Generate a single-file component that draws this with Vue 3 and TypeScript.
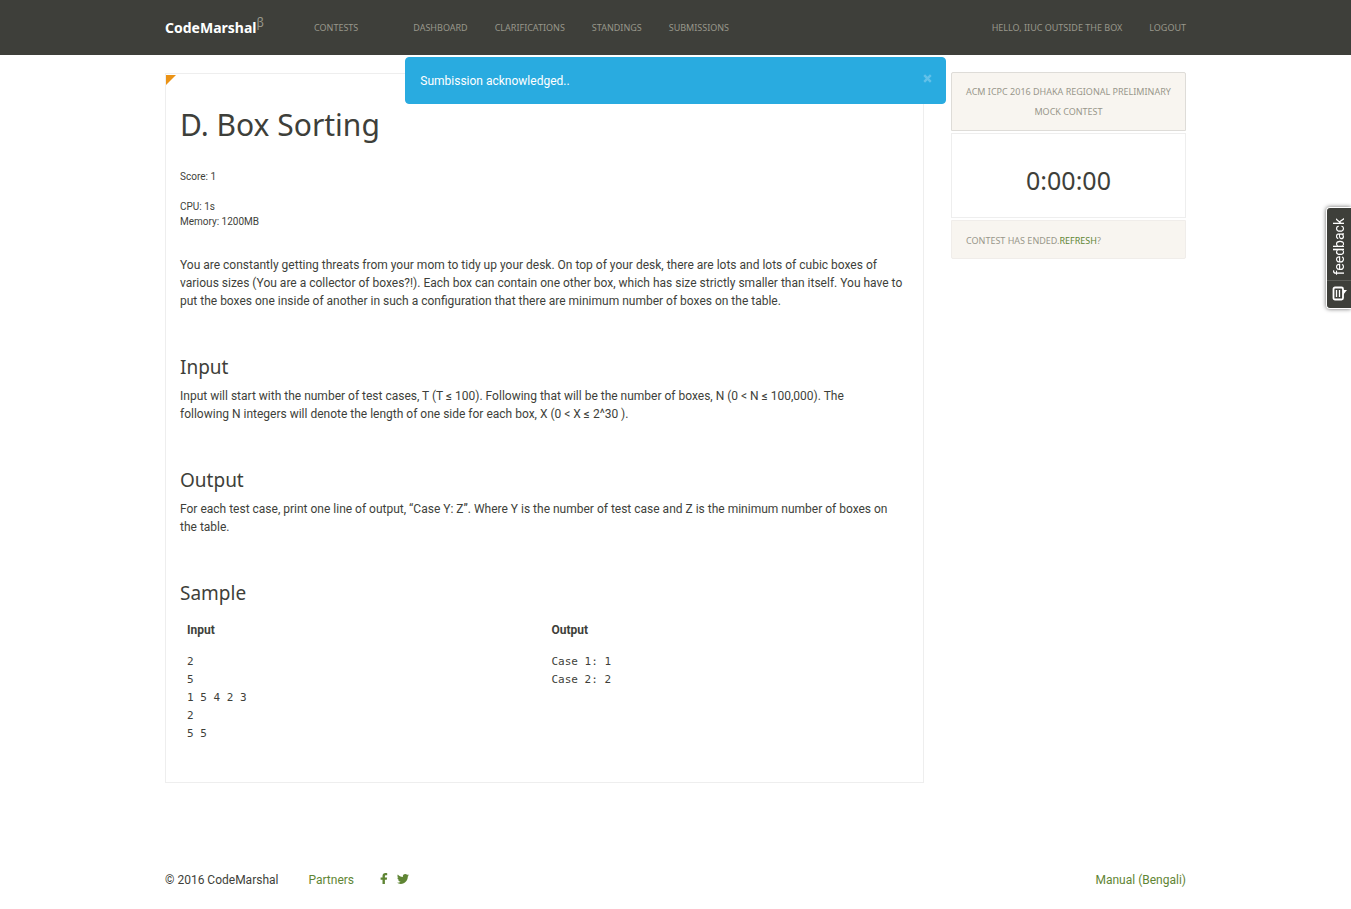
<script setup lang="ts">
import { ref } from 'vue'

interface Section {
  title: string
  text: string
}

const contestLinks: string[] = ['Dashboard', 'Clarifications', 'Standings', 'Submissions']

const sections: Section[] = [
  {
    title: 'Input',
    text: 'Input will start with the number of test cases, T (T ≤ 100). Following that will be the number of boxes, N (0 < N ≤ 100,000). The following N integers will denote the length of one side for each box, X (0 < X ≤ 2^30 ).',
  },
  {
    title: 'Output',
    text: 'For each test case, print one line of output, “Case Y: Z”. Where Y is the number of test case and Z is the minimum number of boxes on the table.',
  },
]

const sampleInput = ['2', '5', '1 5 4 2 3', '2', '5 5'].join('\n')
const sampleOutput = ['Case 1: 1', 'Case 2: 2'].join('\n')

const alertOpen = ref(true)
</script>

<template>
  <div class="page">
    <header class="topbar">
      <nav class="container nav" aria-label="Main">
        <a class="brand" href="#">CodeMarshal<sup>β</sup></a>
        <a class="nav-link contests" href="#">Contests</a>
        <div class="nav-group">
          <a v-for="link in contestLinks" :key="link" class="nav-link" href="#">{{ link }}</a>
        </div>
        <div class="nav-group account">
          <a class="nav-link" href="#">Hello, IIUC Outside the Box</a>
          <a class="nav-link" href="#">Logout</a>
        </div>
      </nav>
    </header>

    <div v-if="alertOpen" class="alert" role="alert">
      <span>Sumbission acknowledged..</span>
      <button class="close" type="button" aria-label="Close" @click="alertOpen = false">
        <svg viewBox="0 0 9 9" width="9" height="9" aria-hidden="true">
          <path d="M1.2 1.2 7.8 7.8M7.8 1.2 1.2 7.8" fill="none" stroke="currentColor" stroke-width="2.4" />
        </svg>
      </button>
    </div>

    <div class="container columns">
      <main class="problem">
        <h1>D. Box Sorting</h1>
        <p class="meta">Score: 1</p>
        <p class="meta">CPU: 1s<br />Memory: 1200MB</p>
        <p class="statement">
          You are constantly getting threats from your mom to tidy up your desk. On top of your desk, there are
          lots and lots of cubic boxes of various sizes (You are a collector of boxes?!). Each box can contain one
          other box, which has size strictly smaller than itself. You have to put the boxes one inside of another
          in such a configuration that there are minimum number of boxes on the table.
        </p>
        <section v-for="section in sections" :key="section.title">
          <h2>{{ section.title }}</h2>
          <p class="section-text">{{ section.text }}</p>
        </section>
        <section>
          <h2>Sample</h2>
          <table class="sample">
            <thead>
              <tr>
                <th scope="col">Input</th>
                <th scope="col">Output</th>
              </tr>
            </thead>
            <tbody>
              <tr>
                <td><pre>{{ sampleInput }}</pre></td>
                <td><pre>{{ sampleOutput }}</pre></td>
              </tr>
            </tbody>
          </table>
        </section>
      </main>

      <aside class="sidebar">
        <a class="contest-name" href="#">ACM ICPC 2016 Dhaka Regional Preliminary Mock Contest</a>
        <div class="timer">0:00:00</div>
        <div class="ended">Contest has ended.<a href="#">Refresh</a>?</div>
      </aside>
    </div>

    <footer class="container footer">
      <span>© 2016 CodeMarshal</span>
      <a class="partners" href="#">Partners</a>
      <a class="social" href="#" aria-label="Facebook">
        <svg viewBox="0 0 8 12" width="8" height="12" aria-hidden="true">
          <path
            d="M7.2.2v2H6c-.9 0-1.100.4-1.100 1.100v1.300h2.200l-.3 2.200H4.900V11H2.500V6.800H.6V4.600h1.900V3C2.500 1.100 3.700.1 5.400.1c.8 0 1.500 0 1.800.1Z"
            fill="currentColor"
          />
        </svg>
      </a>
      <a class="social" href="#" aria-label="Twitter">
        <svg viewBox="0 0 12 10" width="12" height="10" aria-hidden="true">
          <path
            d="M12 1.200c-.4.6-.8 1-1.200 1.300v.3c0 3.300-2.500 7.100-7.100 7.100C2.300 9.900 1 9.500 0 8.800c1.300.1 2.600-.2 3.600-1-1.100 0-2-.7-2.300-1.700h1C1.200 5.800.4 4.900.4 3.600c.3.200.7.300 1.100.3C.4 3.100.1 1.700.8.500 2 2 3.800 3 5.900 3.100 5.500 1.300 6.800 0 8.300 0c.7 0 1.300.3 1.800.8.6-.1 1.100-.3 1.600-.6-.2.6-.6 1.100-1.100 1.400.5-.1 1-.2 1.400-.4Z"
            fill="currentColor"
          />
        </svg>
      </a>
      <a class="manual" href="#">Manual (Bengali)</a>
    </footer>

    <button class="feedback" type="button">
      <span class="feedback-label">feedback</span>
      <span class="feedback-icon">
        <svg viewBox="0 0 16 15" width="16" height="15" aria-hidden="true">
          <path
            d="M4 1.500h6.500A1.500 1.500 0 0 1 12 3v9a1.500 1.500 0 0 1-1.500 1.500H4A1.500 1.500 0 0 1 2.500 12V3A1.500 1.500 0 0 1 4 1.500Z"
            fill="none"
            stroke="currentColor"
            stroke-width="1.800"
          />
          <path d="M12 4h4l-4 5Z" fill="currentColor" />
          <path d="M5.500 4v7M8.500 4v7" stroke="currentColor" stroke-width="1.300" />
        </svg>
      </span>
    </button>
  </div>
</template>

<style>
body {
  margin: 0;
  background: #fff;
}
</style>

<style scoped>
.page {
  --dark: #3e3f3a;
  --muted: #98978b;
  --green: #5f8534;
  --display: 'Noto Sans', 'Open Sans', sans-serif;
  color: var(--dark);
  font: 12px/18px Roboto, 'Noto Sans', sans-serif;
}

a {
  color: var(--green);
  text-decoration: none;
}

.container {
  box-sizing: border-box;
  width: calc(100% - 32px);
  max-width: 1021px;
  margin: 0 auto;
}

.topbar {
  background: var(--dark);
}

.nav {
  display: flex;
  align-items: center;
  height: 55px;
  font-family: var(--display);
}

.brand {
  width: 149px;
  color: #fff;
  font-weight: 700;
  font-size: 14px;
}

.brand sup {
  color: var(--muted);
  font-weight: 400;
  font-size: 12px;
  line-height: 0;
}

.nav-link {
  color: var(--muted);
  font-size: 9px;
  text-transform: uppercase;
  white-space: nowrap;
}

.contests {
  margin-right: 55px;
}

.nav-group {
  display: flex;
  gap: 27px;
}

.account {
  margin-left: auto;
}

.alert {
  position: fixed;
  z-index: 2;
  top: 57px;
  left: 30%;
  box-sizing: border-box;
  display: flex;
  justify-content: space-between;
  width: 40%;
  padding: 15px 13px 13px 14px;
  border: 1px solid #29abe0;
  border-radius: 4px;
  background: #29abe0;
  color: #fff;
  line-height: 17px;
}

.close {
  display: flex;
  height: 13px;
  padding: 1px 0;
  border: 0;
  background: none;
  color: #62c1e9;
  cursor: pointer;
}

.columns {
  display: flex;
  align-items: flex-start;
  gap: 27px;
  padding-top: 18px;
}

.problem {
  position: relative;
  flex: 1;
  min-width: 0;
  padding: 14px 14px 32px;
  border: 1px solid #eee;
}

.problem::before {
  position: absolute;
  top: 1px;
  left: 0;
  border: 5px solid;
  border-color: #eb9316 transparent transparent #eb9316;
  content: '';
}

h1,
h2 {
  font-family: var(--display);
  font-weight: 400;
}

h1 {
  margin: 19px 0 26px;
  font-size: 30px;
  line-height: 36px;
}

h2 {
  margin: 45px 0 7px;
  font-size: 19px;
  line-height: 25px;
}

p {
  margin: 0;
}

.meta {
  margin-bottom: 15px;
  font-size: 10px;
  line-height: 15px;
}

.statement {
  margin-top: 27px;
}

.section-text {
  padding-right: 16px;
}

.sample {
  width: 100%;
  border-collapse: collapse;
  table-layout: fixed;
}

th,
td {
  padding: 7px;
  text-align: left;
  vertical-align: top;
}

th {
  padding-top: 8px;
}

pre {
  margin: 0;
  font: 11px/18px 'DejaVu Sans Mono', monospace;
}

.sidebar {
  display: flex;
  flex-direction: column;
  gap: 2px;
  width: 235px;
  margin-top: -1px;
  color: var(--muted);
  font-family: var(--display);
  font-size: 9px;
  line-height: 20px;
}

.contest-name {
  padding: 9px 13px 8px;
  border: 1px solid #dedcd8;
  border-radius: 2px 2px 0 0;
  background: #f8f5f0;
  color: var(--muted);
  text-align: center;
  text-transform: uppercase;
}

.timer {
  padding: 28px 14px 19px;
  border: 1px solid #eee;
  color: var(--dark);
  font-size: 25px;
  line-height: 36px;
  text-align: center;
}

.ended {
  padding: 10px 14px 7px;
  border: 1px solid #f0edea;
  border-radius: 0 0 2px 2px;
  background: #f8f5f0;
  text-transform: uppercase;
}

.footer {
  display: flex;
  align-items: center;
  padding: 88px 0 20px;
}

.partners {
  margin: 0 26px 0 30px;
}

.social {
  display: flex;
  margin-right: 9px;
  padding-bottom: 2px;
}

.manual {
  margin-left: auto;
}

.feedback {
  position: fixed;
  top: 207px;
  right: 0;
  display: flex;
  flex-direction: column;
  align-items: center;
  width: 25px;
  padding: 0;
  border: 1px solid #fff;
  border-right: 0;
  border-radius: 4px 0 0 4px;
  background: var(--dark);
  box-shadow: 0 0 4px rgba(0, 0, 0, 0.6);
  color: #fff;
  cursor: pointer;
}

.feedback-label {
  padding: 5px 0 10px;
  font-size: 14px;
  font-family: Roboto, 'Noto Sans', sans-serif;
  line-height: 24px;
  writing-mode: vertical-rl;
  transform: rotate(180deg);
}

.feedback-icon {
  display: flex;
  justify-content: center;
  width: 100%;
  padding: 5px 0 7px;
  border-top: 1px solid #5c5d58;
}
</style>
